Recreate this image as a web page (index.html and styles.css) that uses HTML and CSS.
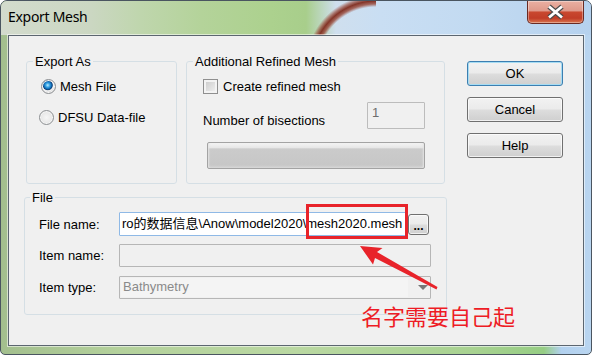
FILE: index.html
```html
<!DOCTYPE html>
<html>
<head>
<meta charset="utf-8">
<title>Export Mesh</title>
<link rel="stylesheet" href="styles.css">
</head>
<body>
<div class="window">
  <div class="titlebar">
    <span class="title">Export Mesh</span>
    <div class="close">
      <svg width="19" height="16" viewBox="0 0 19 16">
        <path class="x-outline" d="M3 2.5 L16 13.5 M16 2.5 L3 13.5"/>
        <path class="x-fill" d="M3 2.5 L16 13.5 M16 2.5 L3 13.5"/>
      </svg>
    </div>
  </div>
  <div class="client">
    <div class="main">
      <div class="top-row">
        <fieldset class="group export-as">
          <legend>Export As</legend>
          <div class="option first"><span class="radio checked"></span><span>Mesh File</span></div>
          <div class="option second"><span class="radio"></span><span>DFSU Data-file</span></div>
        </fieldset>
        <fieldset class="group refined">
          <legend>Additional Refined Mesh</legend>
          <div class="check-row"><span class="checkbox"></span><span>Create refined mesh</span></div>
          <div class="bisect-row"><span class="bisect-label">Number of bisections</span><div class="num-field">1</div></div>
          <div class="bar"></div>
        </fieldset>
      </div>
      <fieldset class="group file">
        <legend>File</legend>
        <div class="field-row"><span class="label">File name:</span><div class="text-field active">ro的数据信息\Anow\model2020\mesh2020.mesh</div><div class="btn browse">...</div></div>
        <div class="field-row second"><span class="label">Item name:</span><div class="text-field disabled wide"></div></div>
        <div class="field-row third"><span class="label">Item type:</span><div class="combo"><span class="combo-text">Bathymetry</span><span class="combo-arrow"></span></div></div>
      </fieldset>
    </div>
    <div class="buttons">
      <div class="btn dlg default">OK</div>
      <div class="btn dlg">Cancel</div>
      <div class="btn dlg">Help</div>
    </div>
    <div class="note-box"></div>
    <svg class="note-arrow" width="90" height="55" viewBox="0 0 90 55">
      <polygon points="5,6 27.5,8 22,12 82.5,47 81.5,49.5 20,18 18,24.5"/>
    </svg>
    <div class="note-text">名字需要自己起</div>
  </div>
</div>
</body>
</html>
```

FILE: styles.css
```css
html, body {
  margin: 0;
  padding: 0;
}

body {
  width: 592px;
  height: 355px;
  overflow: hidden;
  background: #ffffff;
  font-family: "Liberation Sans", Arial, "Noto Sans CJK SC", sans-serif;
  font-size: 13px;
  color: #000;
}

.window {
  box-sizing: border-box;
  width: 592px;
  height: 355px;
  border: 1px solid #4a5560;
  border-radius: 7px 7px 5px 5px;
  overflow: hidden;
  display: flex;
  flex-direction: column;
  background: linear-gradient(to right, #a3bf8e 0%, #b4d19c 20%, #bad8a2 50%, #a8d291 80%, #96cd84 92%, #b2d1ef 95%, #b9d5f0 100%);
}

.titlebar {
  flex: none;
  height: 34px;
  display: flex;
  justify-content: space-between;
  align-items: flex-start;
  background:
    radial-gradient(circle at 375px 64px, rgba(255,255,255,0) 58px, rgba(150,62,44,0.75) 61px, rgba(128,44,30,0.95) 64px, rgba(150,62,44,0.6) 67px, rgba(255,255,255,0) 70px) 0 0 / 375px 100% no-repeat,
    linear-gradient(to right, #d3dbcd 0px, #cbd7c2 90px, #bfd6ad 140px, #b4d39a 200px, #acd18e 270px, #a8ce8b 305px, #cfdfee 335px, #c9def3 380px, #c2daf1 480px, #b5d1ee 592px);
}

.title {
  font-family: "Noto Sans", "Open Sans", sans-serif;
  font-size: 14px;
  letter-spacing: -0.3px;
  line-height: 20px;
  padding: 6px 0 0 7px;
  color: #000;
}

.close {
  box-sizing: border-box;
  width: 57px;
  height: 23px;
  margin-right: 7px;
  border: 1px solid #6a2a22;
  border-top: none;
  border-radius: 0 0 5px 5px;
  background: linear-gradient(to bottom, #eab0a2 0%, #df998a 45%, #c9482f 50%, #c13d27 78%, #d9754f 100%);
  box-shadow: inset 0 0 0 1px rgba(255,255,255,0.35);
  display: flex;
  align-items: center;
  justify-content: center;
}

.close svg {
  display: block;
}

.x-outline {
  fill: none;
  stroke: #4a4a4a;
  stroke-width: 5;
}

.x-fill {
  fill: none;
  stroke: #ffffff;
  stroke-width: 2.8;
}

.client {
  flex: 1;
  margin: 0 7px 8px 7px;
  border: 1px solid #5c6670;
  box-shadow: 0 0 0 1px rgba(255,255,255,0.55);
  background: #f0f0f0;
  position: relative;
  display: flex;
  align-items: flex-start;
}

.main {
  width: 423px;
  padding: 17px 0 0 15px;
}

.top-row {
  display: flex;
  padding-left: 2px;
  gap: 9px;
}

.group {
  box-sizing: border-box;
  margin: 0;
  min-width: 0;
  padding: 0 6px;
  border: 1px solid #d5dfe5;
  border-radius: 3px;
}

.group legend {
  padding: 0 2px;
  line-height: 17px;
  font-size: 13px;
}

.export-as {
  width: 151px;
  height: 131px;
}

.refined {
  width: 259px;
  height: 131px;
}

.file {
  width: 423px;
  height: 126px;
  margin-top: 5px;
  padding: 0 5px;
}

.option {
  display: flex;
  align-items: center;
  gap: 4px;
  line-height: 15px;
  height: 15px;
}

.option.first {
  margin: 9px 0 0 8px;
}

.option.second {
  margin: 16px 0 0 6px;
}

.radio {
  box-sizing: border-box;
  width: 15px;
  height: 15px;
  border-radius: 50%;
  border: 1px solid #8d9093;
  background: radial-gradient(circle at 50% 50%, #f6f6f6 0%, #e9e9e9 55%, #d2d2d2 100%);
  box-shadow: inset 0 0 0 1px #f7f7f7;
}

.radio.checked {
  background: radial-gradient(circle at 44% 40%, #bfeaff 0px, #3aa7e6 2px, #1272bd 3.5px, #0c3f78 4.6px, #e8e8e8 5.4px, #f4f4f4 6px, #d4d4d4 7px);
}

.check-row {
  display: flex;
  align-items: center;
  gap: 5px;
  height: 15px;
  line-height: 15px;
  margin: 9px 0 0 10px;
}

.checkbox {
  box-sizing: border-box;
  width: 15px;
  height: 15px;
  border: 1px solid #8f8f8f;
  background: linear-gradient(135deg, #c8c8c8 0%, #e2e2e2 60%, #f4f4f4 100%);
  box-shadow: inset 0 0 0 2px #f3f3f3;
}

.bisect-row {
  display: flex;
  align-items: flex-start;
  margin: 8px 0 0 10px;
}

.bisect-label {
  width: 164px;
  line-height: 15px;
  margin-top: 11px;
}

.num-field {
  box-sizing: border-box;
  width: 58px;
  height: 27px;
  border: 1px solid #bcbcbc;
  border-radius: 1px;
  background: #f0f0f0;
  color: #6d6d6d;
  line-height: 15px;
  padding: 2px 0 0 4px;
}

.bar {
  box-sizing: border-box;
  width: 218px;
  height: 27px;
  margin: 13px 0 0 14px;
  border: 1px solid #a3a3a3;
  border-radius: 2px;
  background: linear-gradient(to bottom, #f4f4f4 0%, #e7e7e7 18%, #cbcbcb 24%, #c7c7c7 88%, #d6d6d6 100%);
  box-shadow: inset 2px 0 2px -1px #e4e4e4, inset -2px 0 2px -1px #e4e4e4;
}

.field-row {
  display: flex;
  align-items: center;
  height: 24px;
  margin: 6px 0 0 9px;
}

.field-row.second {
  height: 23px;
  margin-top: 8px;
}

.field-row.third {
  height: 23px;
  margin-top: 9px;
}

.label {
  width: 80px;
  line-height: 15px;
}

.text-field {
  box-sizing: border-box;
  width: 287px;
  height: 24px;
  padding: 0 2px;
  line-height: 22px;
  white-space: nowrap;
  overflow: hidden;
  background: #ffffff;
  border: 1px solid #8fb9e6;
  border-radius: 1px;
  font-family: "Liberation Sans", Arial, "Noto Sans CJK SC", sans-serif;
}

.text-field.disabled {
  background: #f0f0f0;
  border-color: #b6b6b6;
}

.text-field.wide {
  width: 312px;
  height: 23px;
}

.combo {
  box-sizing: border-box;
  width: 312px;
  height: 23px;
  border: 1px solid #b6b6b6;
  border-radius: 1px;
  background: #f0f0f0;
  display: flex;
  align-items: center;
  padding: 1px;
}

.combo-text {
  width: 285px;
  height: 19px;
  line-height: 17px;
  padding-left: 2px;
  background: #f4f4f4;
  color: #8a8a8a;
}

.combo-arrow {
  width: 0;
  height: 0;
  margin-left: 10px;
  border-left: 5px solid transparent;
  border-right: 5px solid transparent;
  border-top: 5px solid #777777;
}

.btn {
  box-sizing: border-box;
  border: 1px solid #707070;
  border-radius: 3px;
  background: linear-gradient(to bottom, #f2f2f2 0%, #ebebeb 48%, #dddddd 52%, #cfcfcf 100%);
  box-shadow: inset 0 0 0 1px rgba(255,255,255,0.7);
  text-align: center;
}

.browse {
  width: 21px;
  height: 21px;
  margin-left: 2px;
  font-weight: bold;
  line-height: 22px;
  font-size: 12px;
}

.buttons {
  display: flex;
  flex-direction: column;
  gap: 11px;
  padding-top: 25px;
  margin-left: 20px;
}

.dlg {
  width: 96px;
  height: 25px;
  line-height: 23px;
}

.dlg.default {
  border-color: #3c7fb1;
  box-shadow: inset 0 0 0 1px #a6dcf3;
}

.note-box {
  position: absolute;
  left: 297px;
  top: 168px;
  width: 102px;
  height: 35px;
  box-sizing: border-box;
  border: 3px solid #e8232a;
}

.note-arrow {
  position: absolute;
  left: 346px;
  top: 204px;
}

.note-arrow polygon {
  fill: #e8232a;
}

.note-text {
  position: absolute;
  left: 352px;
  top: 266px;
  font-family: "Noto Sans CJK SC", sans-serif;
  font-size: 22px;
  line-height: 26px;
  color: #ee1c25;
  white-space: nowrap;
}
```
